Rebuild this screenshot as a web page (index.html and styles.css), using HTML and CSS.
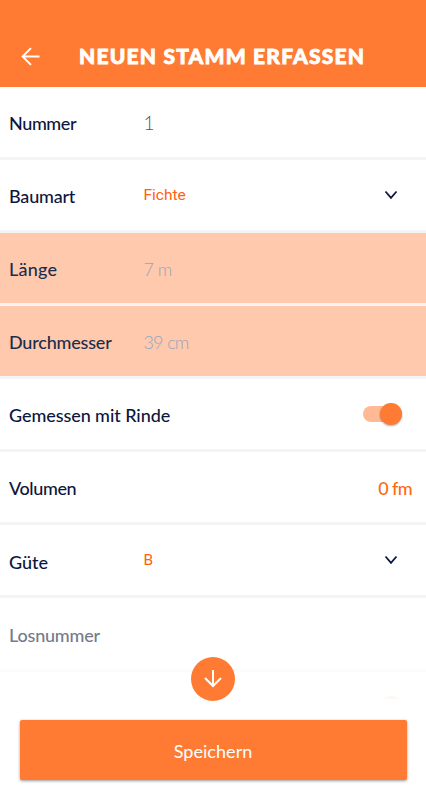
FILE: index.html
```html
<!DOCTYPE html>
<html lang="de">
<head>
<meta charset="utf-8">
<meta name="viewport" content="width=device-width, initial-scale=1">
<title>Neuen Stamm erfassen</title>
<link rel="stylesheet" href="styles.css">
</head>
<body>
<main class="screen">
  <header class="bar">
    <svg class="back" viewBox="0 0 20 20" aria-label="Zurück"><path d="M18.500 10.500H2M10 2.100 1.600 10.500l8.400 8.400"/></svg>
    <h1 class="title">NEUEN STAMM ERFASSEN</h1>
  </header>
  <section class="form">
    <div class="row"><span class="label nummer">Nummer</span><span class="value number">1</span></div>
    <div class="row"><span class="label baumart">Baumart</span><span class="value choice">Fichte</span><svg class="chevron" viewBox="0 0 14 10"><path d="M1.500 1.500 7 7.800l5.500-6.300"/></svg></div>
    <div class="row missing"><span class="label laenge">Länge</span><span class="value hint">7 m</span></div>
    <div class="row missing"><span class="label durchmesser">Durchmesser</span><span class="value hint">39 cm</span></div>
    <div class="row"><span class="label wide">Gemessen mit Rinde</span><span class="switch"><span class="knob"></span></span></div>
    <div class="row"><span class="label volumen">Volumen</span><span class="total">0 fm</span></div>
    <div class="row"><span class="label guete">Güte</span><span class="value choice">B</span><svg class="chevron" viewBox="0 0 14 10"><path d="M1.500 1.500 7 7.800l5.500-6.300"/></svg></div>
    <div class="row last"><span class="label muted">Losnummer</span></div>
    <div class="faded"><span class="knob"></span></div>
  </section>
  <footer class="actions">
    <button class="scroll" aria-label="Nach unten"><svg viewBox="0 0 20 20"><path d="M10 1V17M2 9l8 8 8-8"/></svg></button>
    <button class="save"><span>Speichern</span></button>
  </footer>
</main>
</body>
</html>
```
FILE: styles.css
```css
* { box-sizing: border-box; }
body { margin: 0; background: #fff; color: #0c1640; font-family: Lato, "Liberation Sans", sans-serif; }
button { border: 0; padding: 0; font: inherit; }
svg { display: block; fill: none; stroke: currentColor; }
.screen { width: 426px; height: 800px; overflow: hidden; display: flex; flex-direction: column; }
.bar { height: 86.5px; flex: none; background: #ff7b33; color: #fff; display: flex; align-items: flex-start; padding: 46px 0 0 21px; }
.back { width: 20px; height: 20px; stroke-width: 2; margin-right: 38px; }
.title { margin: -2px 0 0; font-size: 21px; line-height: 24px; font-weight: 900; letter-spacing: 1.200px; -webkit-text-stroke: .8px #fff; white-space: nowrap; }
.form { flex: none; }
.row { height: 73.150px; border-bottom: 3px solid #f4f4f5; padding: 2px 14px 0 9px; display: flex; align-items: center; }
.missing { background: #ffc9ad; }
.label { width: 134.500px; flex: none; font-size: 18px; line-height: 24px; font-weight: 500; white-space: nowrap; }
.nummer, .volumen { letter-spacing: -.4px; }
.baumart, .durchmesser { letter-spacing: -.2px; }
.laenge { letter-spacing: .2px; }
.laenge, .durchmesser { color: #1b2d4c; }
.guete { padding-top: 1px; }
.wide { width: 354px; letter-spacing: -.07px; }
.muted { color: #747a8c; letter-spacing: -.2px; }
.value { font-size: 18px; line-height: 24px; font-weight: 300; white-space: nowrap; }
.number { font-size: 19px; color: #4b526e; }
.choice { flex: 1; font: 400 15.500px/20px Roboto, sans-serif; color: #ff6111; margin-top: -2px; }
.hint { color: #98a5bd; letter-spacing: -1px; word-spacing: 1px; }
.chevron { width: 14px; height: 10px; stroke-width: 1.800; margin: -2px 14.500px 0 0; }
.switch { width: 39px; height: 16px; border-radius: 8px; background: #ffb995; display: flex; justify-content: flex-end; align-items: center; margin-top: -2px; }
.knob { width: 22px; height: 22px; flex: none; border-radius: 50%; background: #ff7b33; box-shadow: 0 1px 2px rgba(0,0,0,.35); }
.total { margin-left: auto; font-size: 18px; line-height: 24px; font-weight: 500; letter-spacing: -.6px; color: #ff6a13; }
.last { border-bottom-color: #fcfcfc; }
.faded { height: 27px; padding: 24px 24px 0 0; overflow: hidden; display: flex; justify-content: flex-end; opacity: .06; }
.actions { display: flex; flex-direction: column; align-items: center; margin-top: -42px; }
.scroll { width: 44px; height: 44px; border-radius: 50%; background: #ff7b33; color: #fff; display: grid; place-items: center; flex: none; position: relative; }
.scroll svg { width: 20px; height: 20px; stroke-width: 2; }
.save { width: 387px; height: 60.500px; margin-top: 19px; border-radius: 2px; background: #ff7b33; color: #fff; font-size: 18px; letter-spacing: .05px; box-shadow: 0 1px 3px rgba(0,0,0,.4); display: grid; place-items: center; padding-top: 2px; }
```
